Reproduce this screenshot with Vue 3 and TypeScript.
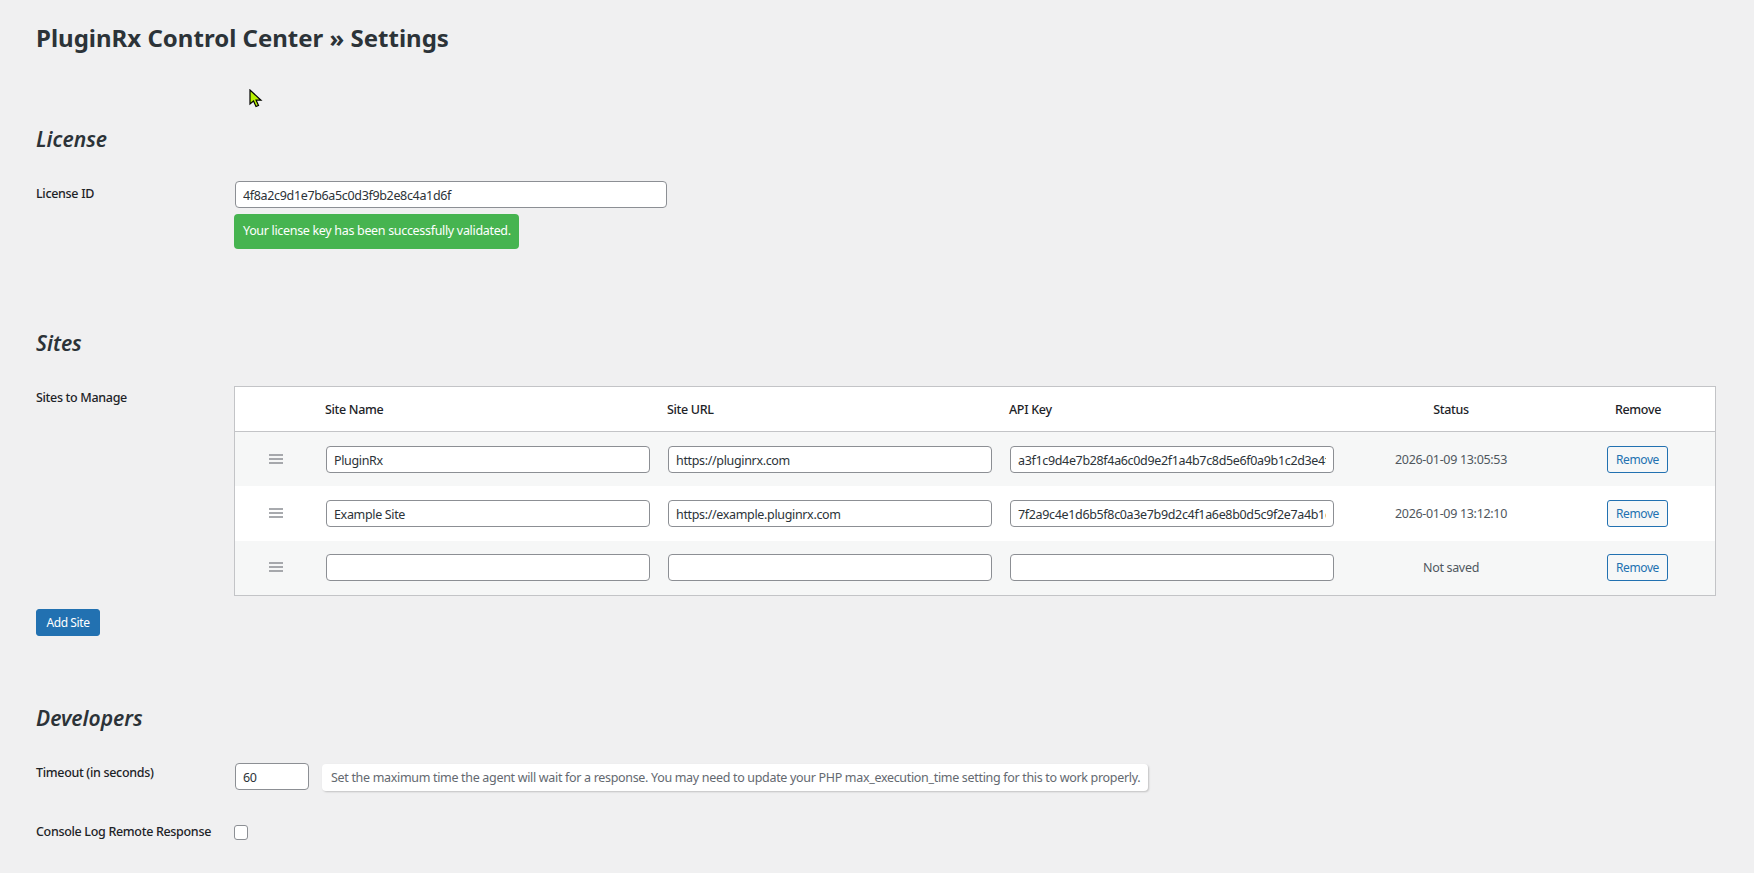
<script setup lang="ts">
interface Site {
  name: string
  url: string
  key: string
  status: string
}

const sites: Site[] = [
  { name: 'PluginRx', url: 'https://pluginrx.com', key: 'a3f1c9d4e7b28f4a6c0d9e2f1a4b7c8d5e6f0a9b1c2d3e4f', status: '2026-01-09 13:05:53' },
  { name: 'Example Site', url: 'https://example.pluginrx.com', key: '7f2a9c4e1d6b5f8c0a3e7b9d2c4f1a6e8b0d5c9f2e7a4b1c', status: '2026-01-09 13:12:10' },
  { name: '', url: '', key: '', status: 'Not saved' },
]
</script>

<template>
  <main class="page">
    <h1>PluginRx Control Center » Settings</h1>

    <h2 class="license-title">License</h2>
    <div class="form-row license-row">
      <label class="label">License ID</label>
      <div>
        <input class="text license-input" type="text" value="4f8a2c9d1e7b6a5c0d3f9b2e8c4a1d6f" />
        <div class="notice">Your license key has been successfully validated.</div>
      </div>
    </div>

    <h2 class="sites-title">Sites</h2>
    <div class="form-row sites-row">
      <label class="label">Sites to Manage</label>
      <div class="table">
        <div class="tr head">
          <div></div>
          <div class="th">Site Name</div>
          <div class="th">Site URL</div>
          <div class="th">API Key</div>
          <div class="th center">Status</div>
          <div class="th center remove-head">Remove</div>
        </div>
        <div v-for="(site, i) in sites" :key="i" class="tr row" :class="{ odd: i % 2 === 0 }">
          <div class="handle">
            <svg width="14" height="10" viewBox="0 0 14 10" aria-hidden="true">
              <path d="M0 1h14M0 5h14M0 9h14" stroke="#8c8f94" stroke-width="1.5" fill="none" />
            </svg>
          </div>
          <div class="td"><input class="text cell-input" type="text" :value="site.name" /></div>
          <div class="td"><input class="text cell-input" type="text" :value="site.url" /></div>
          <div class="td"><input class="text cell-input" type="text" :value="site.key" /></div>
          <div class="status">{{ site.status }}</div>
          <div class="center remove-cell"><button class="btn" type="button">Remove</button></div>
        </div>
      </div>
    </div>
    <button class="btn primary" type="button">Add Site</button>

    <h2 class="dev-title">Developers</h2>
    <div class="form-row timeout-row">
      <label class="label timeout-label">Timeout (in seconds)</label>
      <div class="timeout-field">
        <input class="text timeout-input" type="text" value="60" />
        <p class="description">Set the maximum time the agent will wait for a response. You may need to update your PHP max_execution_time setting for this to work properly.</p>
      </div>
    </div>
    <div class="form-row console-row">
      <label class="label console-label">Console Log Remote Response</label>
      <input class="check" type="checkbox" />
    </div>

    <svg class="cursor" width="14" height="19" viewBox="0 0 14 19" aria-hidden="true">
      <path d="M1 1v14l3.5-3 2.5 5.5 2.5-1-2.4-5.3H12z" fill="#b6f000" stroke="#000" stroke-width="1.2" />
    </svg>
  </main>
</template>

<style>
html, body {
  margin: 0;
  background: #f0f0f1;
}
</style>

<style scoped>
.page {
  position: relative;
  box-sizing: border-box;
  height: 873px;
  overflow: hidden;
  padding: 23px 38px 0 36px;
  font-family: "Noto Sans", "Open Sans", sans-serif;
  font-size: 12.5px;
  letter-spacing: -0.32px;
  color: #3c434a;
  background: #f0f0f1;
}
h1 {
  margin: 0;
  font-size: 24px;
  line-height: 30px;
  font-weight: 700;
  letter-spacing: 0;
  color: #2c3338;
}
h2 {
  margin: 0;
  font-size: 21px;
  line-height: 30px;
  font-weight: 600;
  font-style: italic;
  letter-spacing: 0;
  color: #2c3338;
}
.license-title { margin-top: 71px; }
.sites-title { margin-top: 79px; }
.dev-title { margin-top: 67px; }
.form-row {
  display: grid;
  grid-template-columns: 198px 1fr;
}
.license-row { margin-top: 27px; }
.sites-row { margin-top: 28px; }
.timeout-row { margin-top: 30px; }
.console-row { margin-top: 34px; }
.label {
  font-weight: 500;
  line-height: 20px;
  color: #1d2327;
  margin-top: 3px;
  white-space: nowrap;
}
.sites-row .label { margin-top: 2px; }
.timeout-label { margin-top: 0; }
.console-label { margin-top: -3px; }
.text {
  display: block;
  box-sizing: border-box;
  height: 27px;
  margin: 0 1px;
  padding: 1px 7px 0;
  border: 1px solid #8c8f94;
  border-radius: 4px;
  background: #fff;
  color: #2c3338;
  font: inherit;
  letter-spacing: -0.34px;
  outline: none;
}
.license-input { width: 432px; }
.notice {
  box-sizing: border-box;
  width: 285px;
  height: 35px;
  margin-top: 6px;
  padding: 0 9px;
  border-radius: 4px;
  background: #46b450;
  color: #fff;
  line-height: 34px;
  white-space: nowrap;
}
.table {
  width: 1482px;
  box-sizing: border-box;
  border: 1px solid #c3c4c7;
  background: #fff;
}
.tr {
  display: grid;
  grid-template-columns: 82px 342px 342px 342px 216px 1fr;
  align-items: center;
  box-sizing: border-box;
}
.head {
  height: 45px;
  border-bottom: 1px solid #c3c4c7;
}
.th {
  padding-left: 8px;
  font-weight: 500;
  color: #1d2327;
}
.center {
  text-align: center;
  padding-left: 0;
}
.remove-head { padding-left: 2px; }
.remove-cell { padding-left: 1px; }
.row { height: 54px; }
.row:nth-child(2) { padding-top: 1px; }
.row:nth-child(3) { height: 55px; }
.row:nth-child(4) { padding-bottom: 1px; }
.odd { background: #f6f7f7; }
.handle {
  display: flex;
  justify-content: center;
  margin-left: -1px;
  margin-top: -1px;
}
.td { padding-left: 8px; }
.cell-input { width: 324px; }
.status {
  text-align: center;
  color: #50575e;
}
.btn {
  box-sizing: border-box;
  height: 27px;
  width: 61px;
  padding: 0;
  border: 1px solid #2271b1;
  border-radius: 3px;
  background: #f6f7f7;
  color: #2271b1;
  font: inherit;
  font-size: 12px;
  letter-spacing: -0.4px;
  cursor: pointer;
}
.primary {
  display: block;
  width: 64px;
  margin-top: 13px;
  background: #2271b1;
  color: #fff;
}
.timeout-field {
  display: flex;
  align-items: flex-start;
}
.timeout-input { width: 74px; }
.description {
  margin: 1px 0 0 12px;
  box-sizing: border-box;
  width: 826px;
  height: 27px;
  padding: 0 9px;
  border-radius: 4px;
  background: #fff;
  box-shadow: 1px 1px 2px rgba(0, 0, 0, 0.2);
  color: #646970;
  line-height: 27px;
  white-space: nowrap;
}
.check {
  appearance: none;
  display: block;
  box-sizing: border-box;
  width: 14px;
  height: 15px;
  margin: 0;
  border: 1px solid #8c8f94;
  border-radius: 3px;
  background: #fff;
}
.cursor {
  position: absolute;
  left: 249px;
  top: 89px;
}
</style>
